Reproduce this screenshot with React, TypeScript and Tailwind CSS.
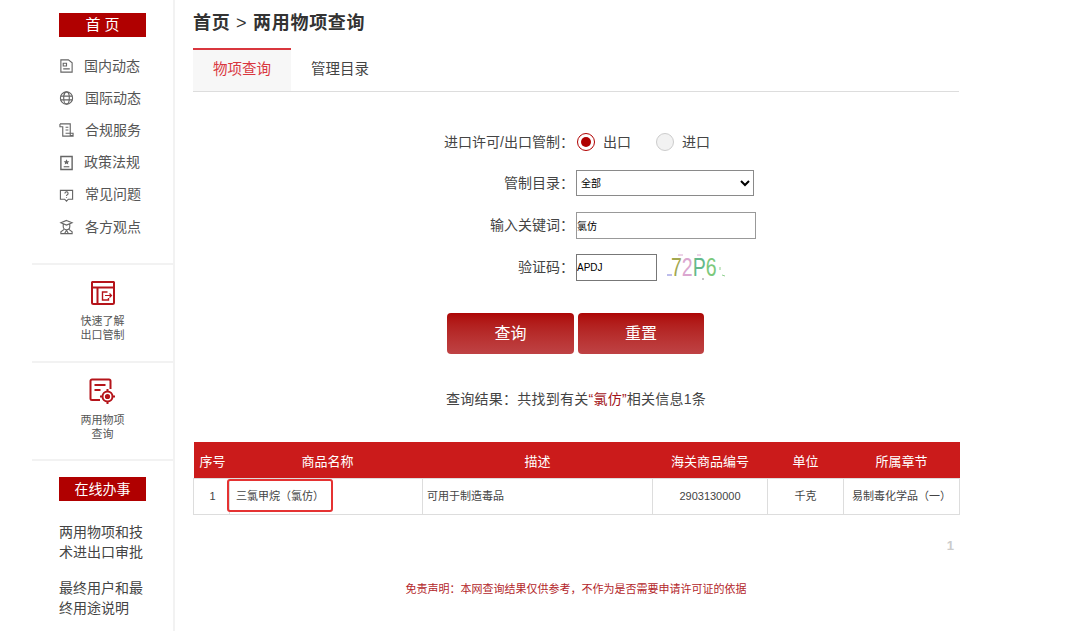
const font = "font-['Liberation_Sans','Noto_Sans_CJK_SC',sans-serif]";

function NavIcon({ kind }: { kind: string }) {
  return (
    <svg width="15" height="16" viewBox="0 0 16 16" fill="none" stroke="#666" strokeWidth="1.2" className="shrink-0">
      {kind === "news" && (
        <>
          <path d="M2 1.500h8l4 3v10H2z" />
          <path d="M4.500 5h3.500v3H4.500zM4.500 11h7" />
        </>
      )}
      {kind === "globe" && (
        <>
          <circle cx="8" cy="8" r="6.500" />
          <ellipse cx="8" cy="8" rx="3" ry="6.500" />
          <path d="M1.500 6h13M1.500 10h13" />
        </>
      )}
      {kind === "book" && (
        <path d="M1 1.500h11v12.500h3M1 1.500v3h3v10h11v-3H7M7 5h3M7 8h3" />
      )}
      {kind === "law" && (
        <>
          <path d="M2 1h12v14H2z" strokeWidth="1.500" />
          <path d="M8 4l1 2 2 .2-1.500 1.400.4 2L8 8.600l-1.900 1 .4-2L5 6.200 7 6z" fill="#666" stroke="none" />
          <path d="M5 12h6" />
        </>
      )}
      {kind === "faq" && (
        <>
          <path d="M1.500 3h13v9.500H10L8 14.500 6 12.500H1.500z" />
          <path d="M6.300 6.300a1.700 1.700 0 1 1 2.500 1.500c-.6.300-.8.700-.8 1.200M8 10.300v.8" />
        </>
      )}
      {kind === "people" && (
        <>
          <path d="M8 1l6 2.500L8 6 2 3.500zM4.500 4.800v2.700a3.500 3.500 0 0 0 7 0V4.800" />
          <path d="M5.500 10.500L2 13v2h12v-2l-3.500-2.500M8 11.500l-2 3.500M8 11.500l2 3.500" />
        </>
      )}
    </svg>
  );
}

const navItems = [
  { kind: "news", label: "国内动态", gap: "gap-[10px]" },
  { kind: "globe", label: "国际动态", gap: "gap-[11px]" },
  { kind: "book", label: "合规服务", gap: "gap-[11px]" },
  { kind: "law", label: "政策法规", gap: "gap-[10px]" },
  { kind: "faq", label: "常见问题", gap: "gap-[11px]" },
  { kind: "people", label: "各方观点", gap: "gap-[11px]" },
];

function Sidebar() {
  return (
    <aside className="w-[175px] h-[631px] shrink-0 border-r-2 border-[#f2f2f2] pt-[13px] overflow-hidden">
      <div className="ml-[59px] w-[87px] h-[24px] bg-[#b00000] text-white text-[15px] leading-[24px] text-center">
        首 页
      </div>
      <ul className="mt-[13px] ml-[59px]">
        {navItems.map((n) => (
          <li key={n.label} className={`flex items-center h-[32.2px] text-[14px] text-[#555] ${n.gap}`}>
            <NavIcon kind={n.kind} />
            <span>{n.label}</span>
          </li>
        ))}
      </ul>
      <div className="ml-[32px] mt-[20px] border-t-2 border-[#f2f2f2] h-[98px] flex flex-col items-center pt-[15px]">
        <svg width="26" height="26" viewBox="0 0 26 26" fill="none" stroke="#b5141a" strokeWidth="2">
          <path d="M1.500 2h23M2 2v20.500a1.500 1.500 0 0 0 1.500 1.500h19a1.500 1.500 0 0 0 1.500-1.500V2M2 7.500h22M7.500 7.500V24" />
          <path d="M17.500 12h-5v8h6v-2" strokeWidth="1.400" />
          <path d="M15 15.500h6M19.500 13.500l2 2-2 2" strokeWidth="1.200" />
        </svg>
        <p className="mt-[8px] text-[11px] leading-[14px] text-center text-[#555]">
          快速了解
          <br />
          出口管制
        </p>
      </div>
      <div className="ml-[32px] border-t-2 border-[#f2f2f2] h-[98px] flex flex-col items-center pt-[15px]">
        <svg width="27" height="27" viewBox="0 0 27 27" fill="none" stroke="#b5141a" strokeWidth="2">
          <path d="M11 22H3a1.500 1.500 0 0 1-1.500-1.500V3A1.500 1.500 0 0 1 3 1.500h17A1.500 1.500 0 0 1 21.500 3v8" />
          <path d="M5.500 7h11M5.500 12h6" />
          <circle cx="18.500" cy="18.500" r="5" />
          <circle cx="18.500" cy="18.500" r="1.600" fill="#b5141a" />
          <path d="M18.500 11v2.500M18.500 23.500V26M11 18.500h2.500M23.500 18.500H26" />
        </svg>
        <p className="mt-[8px] text-[11px] leading-[14px] text-center text-[#555]">
          两用物项
          <br />
          查询
        </p>
      </div>
      <div className="ml-[32px] border-t-2 border-[#f2f2f2] pt-[16px] pl-[27px]">
        <div className="w-[87px] h-[24px] bg-[#b00000] text-white text-[14px] leading-[24px] text-center">
          在线办事
        </div>
        <p className="mt-[21px] text-[14px] leading-[20px] text-[#444]">
          两用物项和技
          <br />
          术进出口审批
        </p>
        <p className="mt-[16px] text-[14px] leading-[20px] text-[#444]">
          最终用户和最
          <br />
          终用途说明
        </p>
      </div>
    </aside>
  );
}

function Label({ children }: { children: React.ReactNode }) {
  return (
    <label className="w-[140px] whitespace-nowrap text-right text-[14px] text-[#444] pr-[2px] shrink-0">
      {children}
    </label>
  );
}

function SearchForm() {
  return (
    <div className="ml-[243px] mt-[38px]">
      <div className="flex items-center h-[24px]">
        <Label>进口许可/出口管制：</Label>
        <span className="ml-[1px] w-[18px] h-[18px] rounded-full border-[1.500px] border-[#b00000] flex items-center justify-center">
          <span className="w-[10px] h-[10px] rounded-full bg-[#b00000]" />
        </span>
        <span className="ml-[8px] text-[14px] text-[#444]">出口</span>
        <span className="ml-[25px] w-[18px] h-[18px] rounded-full border border-[#ccc] bg-[#f2f2f2]" />
        <span className="ml-[8px] text-[14px] text-[#444]">进口</span>
      </div>
      <div className="flex items-center h-[26px] mt-[16px]">
        <Label>管制目录：</Label>
        <select className="w-[178px] h-[26px] border border-[#8a8a8a] bg-white text-[10px] text-black outline-none">
          <option>全部</option>
        </select>
      </div>
      <div className="flex items-center h-[27px] mt-[16px]">
        <Label>输入关键词：</Label>
        <input
          readOnly
          value="氯仿"
          className="w-[180px] h-[27px] border border-[#999] text-[10px] text-black outline-none"
        />
      </div>
      <div className="flex items-center h-[27px] mt-[15px]">
        <Label>验证码：</Label>
        <input
          readOnly
          value="APDJ"
          className="w-[81px] h-[27px] border border-[#777] text-[10px] text-black outline-none"
        />
        <span className="relative ml-[14px] w-[60px] h-[27px]">
          <span className="flex origin-left scale-x-75 text-[26px] leading-[27px]">
            <span className="text-[#a3a84f]">7</span>
            <span className="text-[#dba6d0]">2</span>
            <span className="text-[#63b98b]">P</span>
            <span className="text-[#7cc97c]">6</span>
          </span>
          {/* 验证码干扰点 */}
          <svg width="62" height="27" viewBox="0 0 62 27" fill="none" strokeWidth="1" className="absolute -left-[4px] top-0">
            <path d="M0 21h5" stroke="#7a7ad8" />
            <path d="M11 1h5" stroke="#dba6d0" />
            <path d="M30 1h4" stroke="#dba6d0" />
            <path d="M53 13v3" stroke="#8fd08f" />
            <path d="M55 21l3 1" stroke="#8fd08f" />
            <path d="M35 25h2" stroke="#8a8a8a" />
          </svg>
        </span>
      </div>
      <div className="flex gap-[4px] mt-[32px] ml-[11px]">
        <button className="w-[127px] h-[41px] rounded-[4px] bg-gradient-to-b from-[#ad0404] to-[#bf4244] text-white text-[16px]">
          查询
        </button>
        <button className="w-[126px] h-[41px] rounded-[4px] bg-gradient-to-b from-[#ad0404] to-[#bf4244] text-white text-[16px]">
          重置
        </button>
      </div>
      <p className="mt-[35px] ml-[10px] text-[14px] leading-[20px] tracking-[0.250px] text-[#444] whitespace-nowrap">
        查询结果：共找到有关<span className="text-[#a3141a]">“氯仿”</span>相关信息1条
      </p>
    </div>
  );
}

function ResultTable() {
  return (
    <div className="relative mt-[33px]">
      <table className="w-[766px] table-fixed border-collapse text-center">
        <colgroup>
          <col className="w-[36px]" />
          <col className="w-[193px]" />
          <col className="w-[230px]" />
          <col className="w-[115px]" />
          <col className="w-[76px]" />
          <col className="w-[116px]" />
        </colgroup>
        <thead>
          <tr className="h-[36px] bg-[#cb1b1b] text-white text-[13px]">
            <th className="font-normal pt-[3px] pl-[2px]">序号</th>
            <th className="font-normal pt-[3px] pl-[3px]">商品名称</th>
            <th className="font-normal pt-[3px]">描述</th>
            <th className="font-normal pt-[3px]">海关商品编号</th>
            <th className="font-normal pt-[3px]">单位</th>
            <th className="font-normal pt-[3px]">所属章节</th>
          </tr>
        </thead>
        <tbody>
          <tr className="h-[36px] text-[11px] text-[#444]">
            <td className="border border-[#ddd] pl-[2px] pt-[1px]">1</td>
            <td className="border border-[#ddd] text-left pl-[6px] pt-[1px]">三氯甲烷（氯仿）</td>
            <td className="border border-[#ddd] text-left pl-[4px] pt-[1px]">可用于制造毒品</td>
            <td className="border border-[#ddd] pt-[1px]">2903130000</td>
            <td className="border border-[#ddd] pt-[1px]">千克</td>
            <td className="border border-[#ddd] pt-[1px]">易制毒化学品（一）</td>
          </tr>
        </tbody>
      </table>
      {/* 截图上的红框标注 */}
      <div className="absolute left-[34px] top-[37px] w-[106px] h-[33px] border-2 border-[#e53232] rounded-[3px]" />
    </div>
  );
}

export default function App() {
  return (
    <div className={`flex w-[1080px] h-[631px] overflow-hidden bg-white ${font}`}>
      <Sidebar />
      <main className="ml-[18px] w-[766px]">
        <h1 className="mt-[12px] h-[22px] text-[18px] leading-[22px] tracking-[0.700px] font-bold text-[#333]">
          首页 <span className="font-normal">&gt;</span> 两用物项查询
        </h1>
        <div className="flex h-[43px] mt-[14px] border-b border-[#ddd] box-content">
          <div className="w-[98px] h-[43px] border-t-2 border-[#d9363e] bg-[#f7f7f7] text-[#d9363e] text-[14.500px] leading-[39px] text-center">
            物项查询
          </div>
          <div className="w-[98px] text-[14.500px] leading-[42px] text-center text-[#444]">管理目录</div>
        </div>
        <SearchForm />
        <ResultTable />
        <p className="mt-[21px] text-right pr-[5px] text-[13px] font-bold text-[#ccc]">1</p>
        <p className="mt-[26px] text-center text-[11px] text-[#b3262a]">
          免责声明：本网查询结果仅供参考，不作为是否需要申请许可证的依据
        </p>
      </main>
    </div>
  );
}
